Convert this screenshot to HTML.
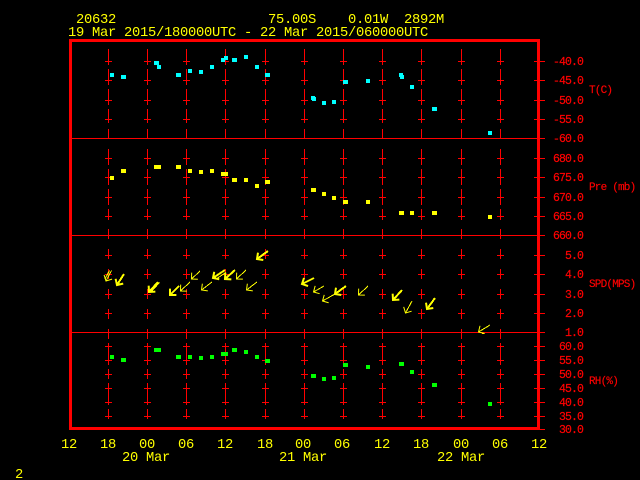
<!DOCTYPE html>
<html>
<head>
<meta charset="utf-8">
<title>Time series</title>
<style>
html,body{margin:0;padding:0;background:#000;width:640px;height:480px;overflow:hidden}
svg{display:block;position:absolute;left:0;top:0}
text{font-family:"Liberation Mono",monospace;white-space:pre}
.y{fill:#ff0;font-size:13.8px;letter-spacing:-.28px}
.r{fill:#f00;stroke:#f00;stroke-width:.2;font-size:11.5px;letter-spacing:-.9px;text-anchor:end}
.l{fill:#f00;stroke:#f00;stroke-width:.15;font-size:11px;letter-spacing:-.8px}
.a{fill:none;stroke:#ff0;marker-end:url(#h)}
.t{stroke-width:2;marker-end:url(#H)}
.n{stroke-width:1}
.p{fill:none;stroke:#ff0;stroke-width:1}
</style>
</head>
<body>
<svg width="640" height="480" viewBox="0 0 640 480" xmlns="http://www.w3.org/2000/svg">
<defs>
<marker id="h" markerUnits="userSpaceOnUse" markerWidth="14" markerHeight="14" refX="7" refY="7" orient="auto" overflow="visible"><path d="M2.5 2.5L7 7L2.5 11.5" fill="none" stroke="#ff0" stroke-width="1"/></marker>
<marker id="H" markerUnits="userSpaceOnUse" markerWidth="14" markerHeight="14" refX="7" refY="7" orient="auto" overflow="visible"><path d="M2.5 2.5L7 7L2.5 11.5" fill="none" stroke="#ff0" stroke-width="2"/></marker>
<g id="g" fill="none" stroke="#f00" stroke-width="1" shape-rendering="crispEdges">
<path d="M.5 49V65M.5 69V85M.5 89V105M.5 109V123M.5 129V138M.5 149V165M.5 169V185M.5 189V205M.5 209V220M.5 229V239M.5 249V259M.5 269V279M.5 289V299M.5 309V319M.5 329V339M.5 343V365M.5 369V379M.5 383V405M.5 409V419"/>
<path d="M-3 61.5h7M-3 80.5h7M-3 100.5h7M-3 119.5h7M-3 158.5h7M-3 177.5h7M-3 197.5h7M-3 216.5h7M-3 255.5h7M-3 274.5h7M-3 294.5h7M-3 313.5h7M-3 346.5h7M-3 360.5h7M-3 374.5h7M-3 388.5h7M-3 402.5h7M-3 416.5h7"/>
</g>
</defs>

<use href="#g" x="108"/><use href="#g" x="147"/><use href="#g" x="186"/><use href="#g" x="225"/><use href="#g" x="265"/><use href="#g" x="304"/><use href="#g" x="343"/><use href="#g" x="382"/><use href="#g" x="421"/><use href="#g" x="461"/><use href="#g" x="500"/>

<g fill="none" stroke="#f00" shape-rendering="crispEdges">
<path d="M72 138.5H545M72 235.5H545M72 332.5H545" stroke-width="1"/>
<path d="M534 61.5h11M534 80.5h11M534 100.5h11M534 119.5h11M534 158.5h11M534 177.5h11M534 197.5h11M534 216.5h11M534 255.5h11M534 274.5h11M534 294.5h11M534 313.5h11M534 346.5h11M534 360.5h11M534 374.5h11M534 388.5h11M534 402.5h11M534 416.5h11M534 429.5h11" stroke-width="1"/>
<rect x="70.5" y="40.5" width="468" height="388" stroke-width="3"/>
</g>

<g fill="#0ff" shape-rendering="crispEdges">
<rect x="110" y="73" width="4" height="4"/><rect x="121" y="75" width="5" height="4"/><rect x="154" y="61" width="5" height="4"/><rect x="157" y="65" width="4" height="4"/><rect x="176" y="73" width="5" height="4"/><rect x="188" y="69" width="4" height="4"/><rect x="199" y="70" width="4" height="4"/><rect x="210" y="65" width="4" height="4"/><rect x="221" y="58" width="4" height="4"/><rect x="224" y="56" width="4" height="4"/><rect x="232" y="58" width="5" height="4"/><rect x="244" y="55" width="4" height="4"/><rect x="255" y="65" width="4" height="4"/><rect x="265" y="73" width="5" height="4"/><rect x="311" y="96" width="4" height="4"/><rect x="312" y="97" width="4" height="4"/><rect x="322" y="101" width="4" height="4"/><rect x="332" y="100" width="4" height="4"/><rect x="343" y="80" width="5" height="4"/><rect x="366" y="79" width="4" height="4"/><rect x="399" y="73" width="4" height="4"/><rect x="400" y="75" width="4" height="4"/><rect x="410" y="85" width="4" height="4"/><rect x="432" y="107" width="5" height="4"/><rect x="488" y="131" width="4" height="4"/>
</g>
<g fill="#ff0" shape-rendering="crispEdges">
<rect x="110" y="176" width="4" height="4"/><rect x="121" y="169" width="5" height="4"/><rect x="154" y="165" width="7" height="4"/><rect x="176" y="165" width="5" height="4"/><rect x="188" y="169" width="4" height="4"/><rect x="199" y="170" width="4" height="4"/><rect x="210" y="169" width="4" height="4"/><rect x="221" y="172" width="7" height="4"/><rect x="232" y="178" width="5" height="4"/><rect x="244" y="178" width="4" height="4"/><rect x="255" y="184" width="4" height="4"/><rect x="265" y="180" width="5" height="4"/><rect x="311" y="188" width="5" height="4"/><rect x="322" y="192" width="4" height="4"/><rect x="332" y="196" width="4" height="4"/><rect x="343" y="200" width="5" height="4"/><rect x="366" y="200" width="4" height="4"/><rect x="399" y="211" width="5" height="4"/><rect x="410" y="211" width="4" height="4"/><rect x="432" y="211" width="5" height="4"/><rect x="488" y="215" width="4" height="4"/>
</g>
<g fill="#0f0" shape-rendering="crispEdges">
<rect x="110" y="355" width="4" height="4"/><rect x="121" y="358" width="5" height="4"/><rect x="154" y="348" width="7" height="4"/><rect x="176" y="355" width="5" height="4"/><rect x="188" y="355" width="4" height="4"/><rect x="199" y="356" width="4" height="4"/><rect x="210" y="355" width="4" height="4"/><rect x="221" y="352" width="7" height="4"/><rect x="232" y="348" width="5" height="4"/><rect x="244" y="350" width="4" height="4"/><rect x="255" y="355" width="4" height="4"/><rect x="265" y="359" width="5" height="4"/><rect x="311" y="374" width="5" height="4"/><rect x="322" y="377" width="4" height="4"/><rect x="332" y="376" width="4" height="4"/><rect x="343" y="363" width="5" height="4"/><rect x="366" y="365" width="4" height="4"/><rect x="399" y="362" width="5" height="4"/><rect x="410" y="370" width="4" height="4"/><rect x="432" y="383" width="5" height="4"/><rect x="488" y="402" width="4" height="4"/>
</g>

<g shape-rendering="crispEdges">
<path class="a n" d="M111.5 270.5L106 281"/>
<path class="p" d="M109.5 270.5L105 279"/>
<path class="a t" d="M124 274L117 285"/>
<path class="a t" d="M158 282L149 292"/>
<path class="p" d="M159.5 282.5L151 292"/>
<path class="a t" d="M179 286L170 295"/>
<path class="a n" d="M190 282L180.5 291"/>
<path class="a n" d="M200 271L191.5 279"/>
<path class="a n" d="M212 282L201.5 290"/>
<path class="a t" d="M225 270L213 278"/>
<path class="p" d="M226 272.5L216 279"/>
<path class="a t" d="M235 270L225 279"/>
<path class="a n" d="M246 270L236.5 279"/>
<path class="a n" d="M257 282L246.5 290"/>
<path class="a t" d="M268 251L257 259"/>
<path class="a t" d="M314 278L302 284"/>
<path class="a n" d="M324 286L313.5 292"/>
<path class="a n" d="M335 294L322.5 301"/>
<path class="a t" d="M346 286L335 294"/>
<path class="a n" d="M368 286L358.5 295"/>
<path class="a t" d="M402 290L393 300"/>
<path class="a n" d="M412 301L405.5 313"/>
<path class="a t" d="M435 298L427 309"/>
<path class="a n" d="M490 325L478.5 332"/>
<rect x="482" y="333" width="2" height="1" fill="#ff0"/>
</g>

<text class="y" x="76" y="23">20632</text>
<text class="y" x="268" y="23">75.00S</text>
<text class="y" x="348" y="23">0.01W  2892M</text>
<text class="y" x="68" y="36">19 Mar 2015/180000UTC - 22 Mar 2015/060000UTC</text>

<text class="r" x="583" y="65">-40.0</text>
<text class="r" x="583" y="84">-45.0</text>
<text class="r" x="583" y="104">-50.0</text>
<text class="r" x="583" y="123">-55.0</text>
<text class="r" x="583" y="142">-60.0</text>
<text class="r" x="583" y="162">680.0</text>
<text class="r" x="583" y="181">675.0</text>
<text class="r" x="583" y="201">670.0</text>
<text class="r" x="583" y="220">665.0</text>
<text class="r" x="583" y="239">660.0</text>
<text class="r" x="583" y="259">5.0</text>
<text class="r" x="583" y="278">4.0</text>
<text class="r" x="583" y="298">3.0</text>
<text class="r" x="583" y="317">2.0</text>
<text class="r" x="583" y="336">1.0</text>
<text class="r" x="583" y="350">60.0</text>
<text class="r" x="583" y="364">55.0</text>
<text class="r" x="583" y="378">50.0</text>
<text class="r" x="583" y="392">45.0</text>
<text class="r" x="583" y="406">40.0</text>
<text class="r" x="583" y="420">35.0</text>
<text class="r" x="583" y="433">30.0</text>

<text class="l" x="589" y="93">T(C)</text>
<text class="l" x="589" y="190">Pre (mb)</text>
<text class="l" x="589" y="287">SPD(MPS)</text>
<text class="l" x="589" y="384">RH(%)</text>

<text class="y" x="61" y="448">12</text>
<text class="y" x="100" y="448">18</text>
<text class="y" x="139" y="448">00</text>
<text class="y" x="178" y="448">06</text>
<text class="y" x="217" y="448">12</text>
<text class="y" x="257" y="448">18</text>
<text class="y" x="295" y="448">00</text>
<text class="y" x="334" y="448">06</text>
<text class="y" x="374" y="448">12</text>
<text class="y" x="413" y="448">18</text>
<text class="y" x="453" y="448">00</text>
<text class="y" x="492" y="448">06</text>
<text class="y" x="531" y="448">12</text>
<text class="y" x="122" y="461">20 Mar</text>
<text class="y" x="279" y="461">21 Mar</text>
<text class="y" x="437" y="461">22 Mar</text>
<text class="y" x="15" y="478">2</text>
</svg>
</body>
</html>
